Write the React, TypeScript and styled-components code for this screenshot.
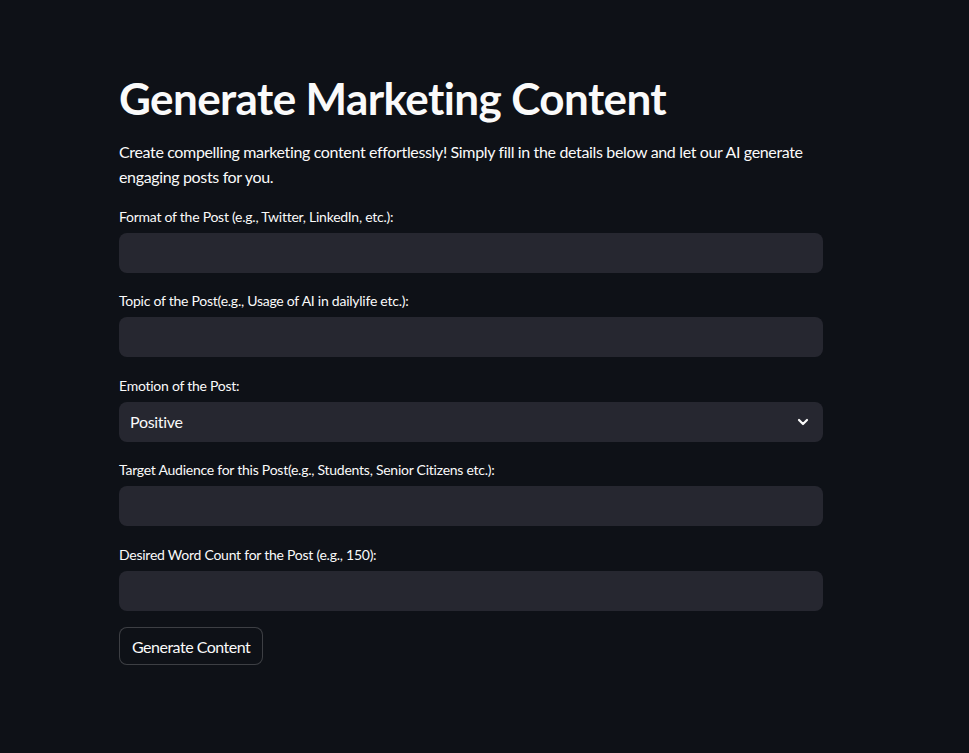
import React from "react";
import styled, { createGlobalStyle } from "styled-components";

const GlobalStyle = createGlobalStyle`
  html, body {
    margin: 0;
    padding: 0;
    background: #0e1117;
    color: #fafafa;
    font-family: "Lato", "Noto Sans", sans-serif;
  }
`;

const Page = styled.main`
  min-height: 753px;
  box-sizing: border-box;
  padding: 54px 0 40px 119px;
`;

const Column = styled.div`
  width: 704px;
  display: flex;
  flex-direction: column;
`;

const Title = styled.h1`
  margin: 0;
  padding: 18px 0 14px;
  font-size: 44px;
  font-weight: 700;
  line-height: 1.2;
  letter-spacing: -0.6px;
  color: #fafafa;
`;

const Intro = styled.p`
  margin: 0 0 15px;
  font-size: 16px;
  line-height: 25.6px;
  letter-spacing: -0.35px;
  color: #fafafa;
`;

const Field = styled.div`
  display: flex;
  flex-direction: column;
  margin-bottom: 16.5px;
`;

const Label = styled.label`
  font-size: 14px;
  line-height: 24px;
  height: 24px;
  margin-bottom: 4px;
  letter-spacing: -0.25px;
  color: #fafafa;
`;

const Input = styled.input`
  box-sizing: border-box;
  height: 40px;
  width: 100%;
  border: none;
  border-radius: 8px;
  background: #262730;
  color: #fafafa;
  font: inherit;
  font-size: 16px;
  padding: 0 12px;
  outline: none;
`;

const Select = styled.div`
  box-sizing: border-box;
  height: 40px;
  border-radius: 8px;
  background: #262730;
  display: flex;
  align-items: center;
  justify-content: space-between;
  padding: 0 14px 0 11px;
  font-size: 16px;
  letter-spacing: -0.3px;
`;

const Button = styled.button`
  align-self: flex-start;
  box-sizing: border-box;
  height: 38px;
  margin-top: 0;
  padding: 0 12px;
  border-radius: 8px;
  border: 1px solid rgba(250, 250, 250, 0.2);
  background: #0e1117;
  color: #fafafa;
  font: inherit;
  font-size: 16px;
  letter-spacing: -0.5px;
`;

const Chevron = () => (
  <svg width="12" height="12" viewBox="0 0 12 12">
    <path d="M2 4 L6 8 L10 4" fill="none" stroke="#fafafa" strokeWidth="2.2" strokeLinecap="round" strokeLinejoin="round" />
  </svg>
);

const fields = [
  "Format of the Post (e.g., Twitter, LinkedIn, etc.):",
  "Topic of the Post(e.g., Usage of AI in dailylife etc.):",
];
const fields2 = [
  "Target Audience for this Post(e.g., Students, Senior Citizens etc.):",
  "Desired Word Count for the Post (e.g., 150):",
];

export default function App() {
  return (
    <>
      <GlobalStyle />
      <Page>
        <Column>
          <Title>Generate Marketing Content</Title>
          <Intro>
            Create compelling marketing content effortlessly! Simply fill in the details below and let our AI generate
            engaging posts for you.
          </Intro>
          {fields.map((f) => (
            <Field key={f}>
              <Label>{f}</Label>
              <Input />
            </Field>
          ))}
          <Field>
            <Label>Emotion of the Post:</Label>
            <Select>
              <span>Positive</span>
              <Chevron />
            </Select>
          </Field>
          {fields2.map((f) => (
            <Field key={f}>
              <Label>{f}</Label>
              <Input />
            </Field>
          ))}
          <Button>Generate Content</Button>
        </Column>
      </Page>
    </>
  );
}
